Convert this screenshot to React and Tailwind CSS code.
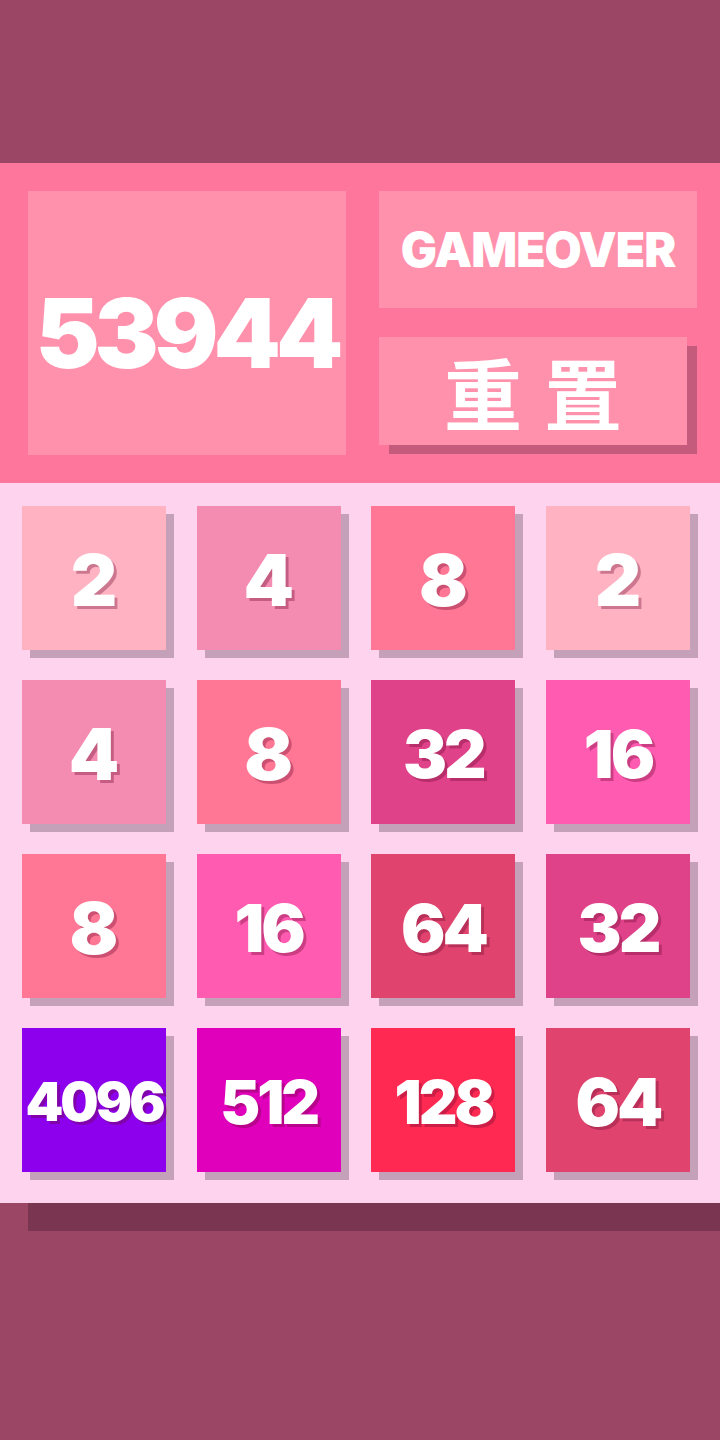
const tiles = [
  [2, 4, 8, 2],
  [4, 8, 32, 16],
  [8, 16, 64, 32],
  [4096, 512, 128, 64],
];

const tileColor = {
  2: 'bg-[#ffb3c2]',
  4: 'bg-[#f48bb0]',
  8: 'bg-[#ff7794]',
  16: 'bg-[#ff5bb0]',
  32: 'bg-[#e0428a]',
  64: 'bg-[#e0446e]',
  128: 'bg-[#ff2952]',
  512: 'bg-[#e000bc]',
  4096: 'bg-[#8c00ee]',
};

const sizeFor = (n) => {
  if (n >= 1000) return 'text-[54px] tracking-[-3px]';
  if (n >= 100) return 'text-[60px] tracking-[-3px]';
  if (n >= 10) return 'text-[66px] tracking-[-3px]';
  return 'text-[72px]';
};

const Tile = ({ value }) => (
  <div
    className={`h-[144px] flex items-center justify-center shadow-[8px_8px_0_#c4a0b9] ${tileColor[value]}`}
  >
    <span
      className={`font-black text-white leading-none mt-[4px] ${sizeFor(value)} [text-shadow:3px_3px_0_rgba(110,10,50,0.35)]`}
    >
      {value}
    </span>
  </div>
);

export default function App() {
  return (
    <div className="w-[720px] h-[1440px] bg-[#9c4666] overflow-hidden font-['Inter','Liberation_Sans',sans-serif]">
      <div className="h-[163px]" />

      <header className="h-[320px] bg-[#ff769d] flex gap-[33px] pl-[28px] pt-[28px]">
        <div className="w-[318px] h-[264px] bg-[#ff91ac] flex items-center justify-center">
          <span className="text-[96px] font-black text-white leading-none tracking-[-5px] mt-[20px]">
            53944
          </span>
        </div>
        <div className="w-[318px] flex flex-col">
          <div className="h-[117px] bg-[#ff91ac] flex items-center justify-center">
            <span className="text-[48px] font-black text-white leading-none tracking-[-1px]">
              GAMEOVER
            </span>
          </div>
          <button className="mt-[29px] w-[308px] h-[108px] bg-[#ff91ac] shadow-[10px_9px_0_#c45a7c] flex items-center justify-center">
            <span className="text-[78px] font-bold text-white leading-none tracking-[22px] pl-[22px] font-['Noto_Sans_CJK_SC','Noto_Sans_CJK_JP',sans-serif]">
              重置
            </span>
          </button>
        </div>
      </header>

      <main className="h-[720px] bg-[#fed3ee] shadow-[28px_28px_0_#7a3550] pl-[22px] pt-[23px]">
        <div className="w-[668px] grid grid-cols-4 gap-x-[30.67px] gap-y-[30px]">
          {tiles.flat().map((v, i) => (
            <Tile key={i} value={v} />
          ))}
        </div>
      </main>
    </div>
  );
}
